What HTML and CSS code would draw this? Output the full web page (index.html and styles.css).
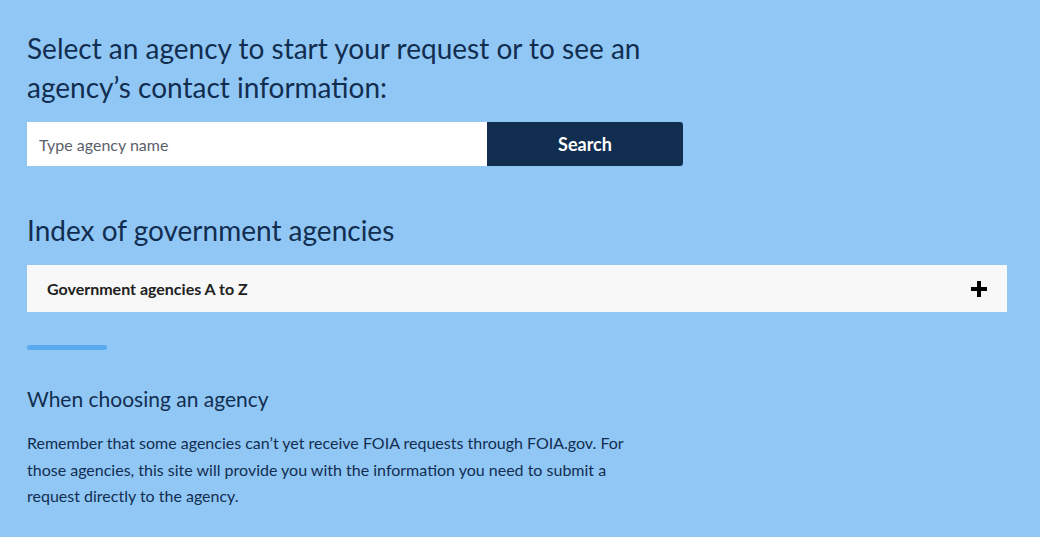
FILE: index.html
```html
<!DOCTYPE html>
<html lang="en">
<head>
<meta charset="utf-8">
<title>Select an agency</title>
<link rel="stylesheet" href="styles.css">
</head>
<body>
<main class="page">
  <section class="search-section">
    <h2 class="lead">Select an agency to start your request or to see an agency’s contact information:</h2>
    <form class="search-form">
      <input class="search-input" type="text" placeholder="Type agency name">
      <button class="search-button" type="button">Search</button>
    </form>
  </section>
  <section class="index-section">
    <h2 class="index-title">Index of government agencies</h2>
    <div class="accordion">
      <span class="accordion-label">Government agencies A to Z</span>
      <svg class="accordion-icon" width="16" height="16" viewBox="0 0 16 16" aria-hidden="true">
        <rect x="6" y="0" width="4" height="16" fill="#000"/>
        <rect x="0" y="6" width="16" height="4" fill="#000"/>
      </svg>
    </div>
  </section>
  <section class="note">
    <div class="rule"></div>
    <h3 class="note-title">When choosing an agency</h3>
    <p class="note-text">Remember that some agencies can’t yet receive FOIA requests through FOIA.gov. For those agencies, this site will provide you with the information you need to submit a request directly to the agency.</p>
  </section>
</main>
</body>
</html>
```

FILE: styles.css
```css
html, body {
  margin: 0;
  padding: 0;
}
body {
  background: #91c7f5;
  font-family: "Source Sans Pro", Lato, "Open Sans", sans-serif;
  color: #112e51;
}
.page {
  padding: 29px 33px 0 27px;
}
.lead {
  margin: 0;
  font-size: 28px;
  font-weight: 400;
  line-height: 39px;
  max-width: 640px;
}
.search-form {
  display: flex;
  margin-top: 15px;
  width: 656px;
  height: 44px;
}
.search-input {
  flex: 1;
  border: 0;
  margin: 0;
  padding: 0 12px;
  font-family: inherit;
  font-size: 16px;
  background: #fff;
  color: #212121;
  outline: none;
}
.search-input::placeholder {
  color: #5b616b;
}
.search-button {
  width: 196px;
  border: 0;
  margin: 0;
  background: #112e51;
  color: #fff;
  font-family: inherit;
  font-weight: 700;
  font-size: 18px;
  border-radius: 0 3px 3px 0;
}
.index-section {
  margin-top: 46px;
}
.index-title {
  margin: 0;
  font-size: 28px;
  font-weight: 400;
  line-height: 36px;
}
.accordion {
  margin-top: 17px;
  height: 47px;
  background: #f8f8f8;
  display: flex;
  align-items: center;
  justify-content: space-between;
  padding: 0 20px;
}
.accordion-label {
  font-weight: 700;
  font-size: 16px;
  color: #212121;
}
.accordion-icon {
  display: block;
}
.note {
  margin-top: 33px;
}
.rule {
  width: 80px;
  height: 5px;
  border-radius: 3px;
  background: #5aaaf2;
}
.note-title {
  margin: 35px 0 0;
  font-size: 21px;
  font-weight: 400;
  line-height: 28px;
}
.note-text {
  margin: 17px 0 0;
  font-size: 16px;
  line-height: 26.5px;
  max-width: 610px;
}
```
